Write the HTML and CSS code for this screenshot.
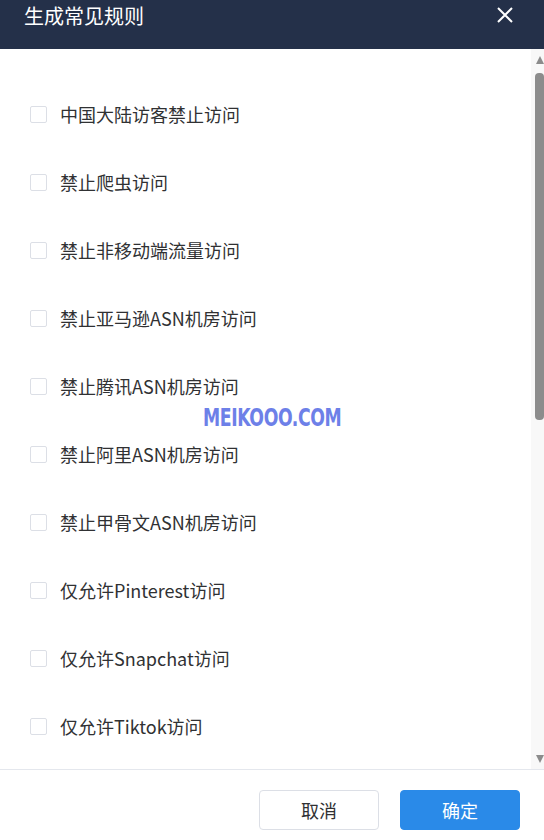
FILE: index.html
```html
<!DOCTYPE html>
<html lang="zh-CN">
<head>
    <meta charset="UTF-8">
    <meta name="viewport" content="width=device-width, initial-scale=1.0">
    <title>生成常见规则</title>
    <link rel="stylesheet" href="styles.css">
</head>
<body>
    <div class="dialog">
        <div class="dialog-header">
            <span class="dialog-title">生成常见规则</span>
            <button class="close-btn" type="button">
                <svg width="16" height="16" viewBox="0 0 16 16">
                    <path d="M1 1 L15 15 M15 1 L1 15" stroke="#fff" stroke-width="2" fill="none"/>
                </svg>
            </button>
        </div>
        <div class="dialog-body">
            <div class="rule-list">
                <label class="rule"><span class="box"></span><span class="rule-name">中国大陆访客禁止访问</span></label>
                <label class="rule"><span class="box"></span><span class="rule-name">禁止爬虫访问</span></label>
                <label class="rule"><span class="box"></span><span class="rule-name">禁止非移动端流量访问</span></label>
                <label class="rule"><span class="box"></span><span class="rule-name">禁止亚马逊ASN机房访问</span></label>
                <label class="rule"><span class="box"></span><span class="rule-name">禁止腾讯ASN机房访问</span></label>
                <label class="rule"><span class="box"></span><span class="rule-name">禁止阿里ASN机房访问</span></label>
                <label class="rule"><span class="box"></span><span class="rule-name">禁止甲骨文ASN机房访问</span></label>
                <label class="rule"><span class="box"></span><span class="rule-name">仅允许Pinterest访问</span></label>
                <label class="rule"><span class="box"></span><span class="rule-name">仅允许Snapchat访问</span></label>
                <label class="rule"><span class="box"></span><span class="rule-name">仅允许Tiktok访问</span></label>
                <div class="watermark">MEIKOOO.COM</div>
            </div>
            <div class="scrollbar">
                <span class="arrow-up"></span>
                <div class="track">
                    <div class="thumb"></div>
                </div>
                <span class="arrow-down"></span>
            </div>
        </div>
        <div class="dialog-footer">
            <button class="btn" type="button">取消</button>
            <button class="btn btn-primary" type="button">确定</button>
        </div>
    </div>
</body>
</html>
```

FILE: styles.css
```css
body {
    margin: 0;
    font-family: "Noto Sans CJK SC", "Noto Sans", sans-serif;
    color: #303133;
}
.dialog {
    width: 544px;
    height: 840px;
    display: flex;
    flex-direction: column;
    background: #fff;
}
.dialog-header {
    height: 49px;
    flex-shrink: 0;
    background: #243049;
    display: flex;
    align-items: flex-start;
    justify-content: space-between;
    padding: 0 31px 0 24px;
}
.dialog-title {
    color: #fff;
    font-size: 20px;
    line-height: 31px;
}
.close-btn {
    border: none;
    background: none;
    padding: 0;
    margin-top: 7px;
    width: 16px;
    height: 16px;
    display: block;
}
.close-btn svg {
    display: block;
}

/* list + scrollbar */
.dialog-body {
    flex: 1;
    display: flex;
    overflow: hidden;
}
.rule-list {
    flex: 1;
    position: relative;
    padding: 31px 0 0 30px;
    overflow: hidden;
}
.rule {
    display: flex;
    align-items: center;
    height: 68px;
}
.box {
    width: 15px;
    height: 15px;
    border: 1px solid #dcdfe6;
    border-radius: 2px;
    background: #fff;
    flex-shrink: 0;
}
.rule-name {
    margin-left: 13px;
    font-size: 18px;
    color: #303133;
}
.watermark {
    position: absolute;
    left: 203px;
    top: 355px;
    font-family: "DejaVu Sans Condensed", "DejaVu Sans", sans-serif;
    font-weight: bold;
    font-size: 24px;
    letter-spacing: -0.5px;
    color: #6d80e8;
    transform: scaleX(0.8);
    transform-origin: left center;
}
.scrollbar {
    width: 13px;
    flex-shrink: 0;
    background: #f8f8f8;
    display: flex;
    flex-direction: column;
    align-items: flex-end;
    padding-top: 7px;
    padding-bottom: 6px;
}
.arrow-up,
.arrow-down {
    width: 0;
    height: 0;
    border-left: 4.5px solid transparent;
    border-right: 4.5px solid transparent;
}
.arrow-up {
    border-bottom: 8px solid #8c8c8c;
}
.arrow-down {
    border-top: 8px solid #8c8c8c;
}
.track {
    flex: 1;
    width: 9px;
    padding-top: 9px;
}
.thumb {
    height: 347px;
    background: #8c8c8c;
    border-radius: 4px;
}

/* footer buttons */
.dialog-footer {
    height: 71px;
    flex-shrink: 0;
    border-top: 1px solid #e4e7ed;
    display: flex;
    justify-content: flex-end;
    align-items: flex-start;
    gap: 21px;
    padding: 20px 24px 0 0;
    box-sizing: border-box;
}
.btn {
    width: 120px;
    height: 40px;
    border: 1px solid #dcdfe6;
    border-radius: 4px;
    background: #fff;
    color: #303133;
    font-family: "Noto Sans CJK SC", sans-serif;
    font-size: 18px;
}
.btn-primary {
    background: #2a8ae8;
    border-color: #2a8ae8;
    color: #fff;
}
```
